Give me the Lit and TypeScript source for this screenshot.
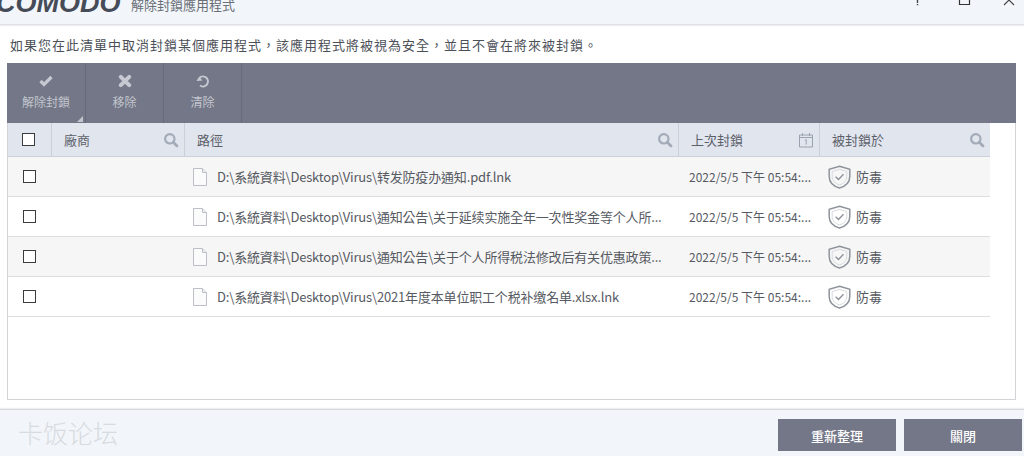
import { LitElement, html, css, svg } from "lit";
import { customElement } from "lit/decorators.js";

const searchIcon = html`<svg class="search" width="16" height="16" viewBox="0 0 16 16"><circle cx="6.8" cy="6.8" r="4.7" fill="none" stroke="#a3abb8" stroke-width="2.2"/><path d="M10.3 10.3 14 14" stroke="#a3abb8" stroke-width="2.8" stroke-linecap="round"/></svg>`;

const calIcon = html`<svg class="search" width="16" height="16" viewBox="0 0 16 16"><path d="M1.5 3h13v12h-13z" fill="none" stroke="#9aa2b0"/><path d="M1.5 5.5h13" stroke="#9aa2b0"/><path d="M4.5 1v3M11.5 1v3" stroke="#9aa2b0"/><path d="M7 8.3 8.2 7.6v5" fill="none" stroke="#9aa2b0"/></svg>`;

const fileIcon = html`<svg class="file" width="14" height="18" viewBox="0 0 14 18"><path d="M.5.500h9l4 4v13h-13z" fill="#fbfbfc" stroke="#bcbfc7"/><path d="M9.500.500v4h4" fill="#eceef1" stroke="#bcbfc7"/></svg>`;

const shieldIcon = html`<svg class="shield" width="23" height="24" viewBox="0 0 23 24"><path d="M11.500 1.200 21.800 4.300v7.200c0 5.600-4.200 9.700-10.300 11.500C5.400 21.200 1.200 17.100 1.200 11.500V4.300z" fill="none" stroke="#8f939c" stroke-width="1.500"/><path d="M11.500 4.300 18.800 6.500v5c0 4-3 7-7.300 8.400-4.300-1.400-7.300-4.400-7.300-8.400v-5z" fill="none" stroke="#d8dade" stroke-width="1"/><path d="M7.600 11.800l2.900 2.800 5-5.400" fill="none" stroke="#8f939c" stroke-width="1.400"/></svg>`;

const rows = [
  "D:\\系統資料\\Desktop\\Virus\\转发防疫办通知.pdf.lnk",
  "D:\\系統資料\\Desktop\\Virus\\通知公告\\关于延续实施全年一次性奖金等个人所...",
  "D:\\系統資料\\Desktop\\Virus\\通知公告\\关于个人所得税法修改后有关优惠政策...",
  "D:\\系統資料\\Desktop\\Virus\\2021年度本单位职工个税补缴名单.xlsx.lnk",
];

const tools = [
  { label: "解除封鎖", w: 78, menu: true, icon: svg`<path d="M1.500 7 5 10.500l7.500-7.500" fill="none" stroke="#c6c9d1" stroke-width="3.200"/>` },
  { label: "移除", w: 77, menu: false, icon: svg`<path d="M2.800 2.800l8.400 8.400M11.200 2.800l-8.400 8.400" fill="none" stroke="#c6c9d1" stroke-width="4" stroke-linecap="round"/>` },
  { label: "清除", w: 77, menu: false, icon: svg`<path d="M3.500 3.800A5 5 0 1 1 4 11.500" fill="none" stroke="#c6c9d1" stroke-width="2"/><path d="M.5 7 3 2.800 6.500 6.500z" fill="#c6c9d1"/>` },
];

@customElement("app-root")
export class AppRoot extends LitElement {
  static styles = css`
    :host {
      display: flex;
      flex-direction: column;
      width: 1024px;
      height: 456px;
      overflow: hidden;
      background: #fff;
      font-family: "Noto Sans CJK TC", "Noto Sans CJK SC", "Noto Sans", sans-serif;
      color: #555a63;
      font-size: 12px;
    }
    .title {
      flex: none;
      height: 25px;
      box-sizing: border-box;
      background: #f2f6fa;
      border-bottom: 1px solid #dfe1e4;
      box-shadow: 0 1px 1px #eceeef;
      display: flex;
      align-items: flex-end;
      overflow: hidden;
    }
    .logo {
      font: italic bold 27px/27px "Liberation Sans", sans-serif;
      color: #464b58;
      width: 131px;
      margin-left: -4px;
      margin-bottom: 7px;
      flex: none;
      white-space: nowrap;
      box-sizing: border-box;
    }
    .apptitle {
      margin-left: 4px;
      font-size: 13px;
      line-height: 16px;
      margin-bottom: 11px;
      color: #6a6f78;
    }
    .winbtns {
      margin-left: auto;
      display: flex;
      align-items: flex-start;
      align-self: flex-start;
    }
    .winbtns svg { display: block; }
    .intro {
      flex: none;
      height: 38px;
      box-sizing: border-box;
      padding: 10px 0 0 10px;
      font-size: 13px;
      line-height: 19px;
      color: #4c5058;
      letter-spacing: 1px;
      white-space: nowrap;
    }
    .panel {
      flex: none;
      margin-left: 7px;
      width: 1009px;
      height: 337px;
      box-sizing: border-box;
      border: 1px solid #d2d3d6;
      border-top: none;
      display: flex;
      flex-direction: column;
    }
    .toolbar {
      flex: none;
      height: 60px;
      margin: 0 -1px;
      background: #737787;
      display: flex;
    }
    .tool {
      box-sizing: border-box;
      border-right: 1px solid #666a79;
      position: relative;
      display: flex;
      flex-direction: column;
      align-items: center;
      padding-top: 11px;
      color: #c2c5cd;
      font-size: 12px;
      line-height: 16px;
    }
    .tool svg.ic { display: block; margin-bottom: 6px; }
    .corner {
      position: absolute;
      right: 2px;
      bottom: 1px;
      width: 0;
      height: 0;
      border-left: 6px solid transparent;
      border-bottom: 6px solid #c3c6cf;
    }
    .grid { width: 982px; margin-left: 0; }
    .head, .row { display: flex; box-sizing: border-box; }
    .head {
      height: 34px;
      background: #e1e5ee;
      border-bottom: 1px solid #ccd0d8;
      color: #5b6069;
      font-size: 13px;
    }
    .hc {
      box-sizing: border-box;
      display: flex;
      align-items: center;
      justify-content: space-between;
      border-right: 1px solid #cbcfd8;
      padding: 0 4px 0 12px;
    }
    .hc:last-child { border-right: none; }
    .hc.cb { width: 44px; justify-content: flex-start; padding-left: 14px; }
    .c1 { width: 133px; }
    .c2 { width: 494px; }
    .c3 { width: 141px; }
    .c4 { flex: 1; }
    .box {
      width: 11px;
      height: 11px;
      border: 1px solid #3a3c40;
      background: #fff;
      flex: none;
    }
    .search { display: block; flex: none; margin-right: 1px; }
    .row {
      height: 40px;
      border-bottom: 1px solid #dcdee1;
      align-items: center;
      background: #fff;
      font-size: 12px;
      color: #565a62;
    }
    .row.odd { background: #f6f6f6; }
    .rc { box-sizing: border-box; display: flex; align-items: center; white-space: nowrap; }
    .rc.cb { width: 44px; padding-left: 15px; }
    .rc.v { width: 133px; }
    .rc.p { width: 494px; padding-left: 8px; gap: 10px; font-size: 13px; letter-spacing: -0.17px; }
    .file { display: block; flex: none; }
    .rc.d { width: 141px; padding-left: 10px; font-size: 12px; }
    .rc.s { flex: 1; padding-left: 8px; gap: 5px; font-size: 13px; }
    .shield { display: block; flex: none; }
    .footer {
      flex: none;
      margin-top: 9px;
      height: 47px;
      box-sizing: border-box;
      background: #f2f6fa;
      border-top: 1px solid #d6d8db;
      box-shadow: 0 -1px 1px #eceeef;
      display: flex;
      align-items: flex-start;
      padding-top: 9px;
    }
    .wm {
      margin-left: 18px;
      font-size: 25px;
      line-height: 27px;
      font-weight: 300;
      color: #d8dbe0;
    }
    .btns { margin-left: auto; display: flex; gap: 8px; margin-right: 2px; }
    .btn {
      width: 118px;
      height: 32px;
      background: #737787;
      color: #fff;
      font-size: 13px;
      font-weight: 500;
      display: flex;
      align-items: center;
      justify-content: center;
    }
  `;

  render() {
    return html`
      <div class="title">
        <span class="logo">COMODO</span>
        <span class="apptitle">解除封鎖應用程式</span>
        <div class="winbtns">
          <svg width="117" height="8" viewBox="0 0 117 8">
            <path d="M10.500 0v3M10.500 4v1.200" stroke="#444" stroke-width="1.400"/>
            <path d="M52.500 0v4.500h10V0" fill="none" stroke="#333" stroke-width="1.200"/>
            <path d="M97 5l5-5 M102 0l5 5" fill="none" stroke="#444" stroke-width="1.100"/>
          </svg>
        </div>
      </div>
      <div class="intro">如果您在此清單中取消封鎖某個應用程式，該應用程式將被視為安全，並且不會在將來被封鎖。</div>
      <div class="panel">
        <div class="toolbar">
          ${tools.map(
            (t) => html`<div class="tool" style="width:${t.w + 1}px">
              <svg class="ic" width="14" height="14" viewBox="0 0 14 14">${t.icon}</svg>
              <span>${t.label}</span>
              ${t.menu ? html`<i class="corner"></i>` : ""}
            </div>`
          )}
        </div>
        <div class="grid">
          <div class="head">
            <div class="hc cb"><span class="box"></span></div>
            <div class="hc c1"><span>廠商</span>${searchIcon}</div>
            <div class="hc c2"><span>路徑</span>${searchIcon}</div>
            <div class="hc c3"><span>上次封鎖</span>${calIcon}</div>
            <div class="hc c4"><span>被封鎖於</span>${searchIcon}</div>
          </div>
          ${rows.map(
            (r, i) => html`<div class="row ${i % 2 === 0 ? "odd" : ""}">
              <div class="rc cb"><span class="box"></span></div>
              <div class="rc v"></div>
              <div class="rc p">${fileIcon}<span>${r}</span></div>
              <div class="rc d"><span>2022/5/5 下午 05:54:...</span></div>
              <div class="rc s">${shieldIcon}<span>防毒</span></div>
            </div>`
          )}
        </div>
      </div>
      <div class="footer">
        <span class="wm">卡饭论坛</span>
        <div class="btns">
          <div class="btn">重新整理</div>
          <div class="btn">關閉</div>
        </div>
      </div>
    `;
  }
}
